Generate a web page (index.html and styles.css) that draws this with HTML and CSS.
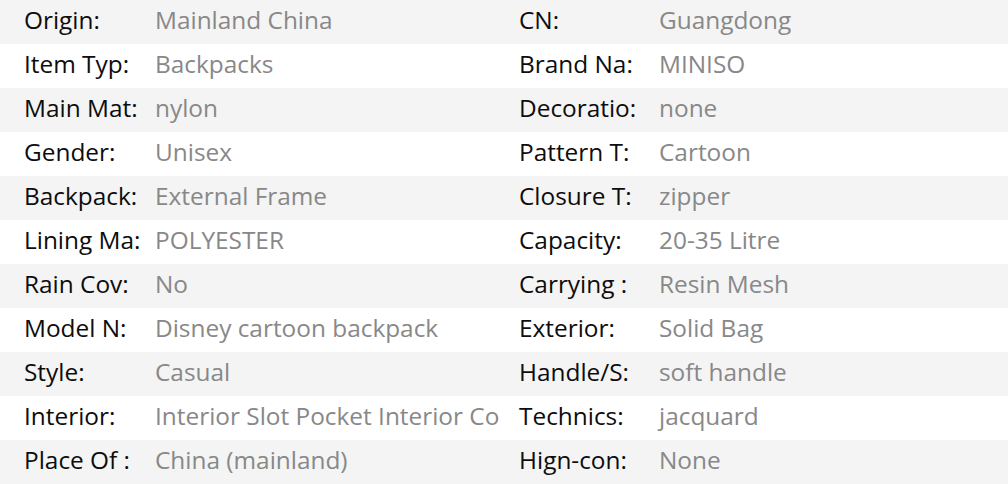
FILE: index.html
```html
<!DOCTYPE html>
<html>
<head>
<meta charset="utf-8">
<link rel="stylesheet" href="styles.css">
</head>
<body>
<div class="specs">
  <div class="row"><span class="k">Origin:</span><span class="v">Mainland China</span><span class="k2">CN:</span><span class="v2">Guangdong</span></div>
  <div class="row"><span class="k">Item Typ:</span><span class="v">Backpacks</span><span class="k2">Brand Na:</span><span class="v2">MINISO</span></div>
  <div class="row"><span class="k">Main Mat:</span><span class="v">nylon</span><span class="k2">Decoratio:</span><span class="v2">none</span></div>
  <div class="row"><span class="k">Gender:</span><span class="v">Unisex</span><span class="k2">Pattern T:</span><span class="v2">Cartoon</span></div>
  <div class="row"><span class="k">Backpack:</span><span class="v">External Frame</span><span class="k2">Closure T:</span><span class="v2">zipper</span></div>
  <div class="row"><span class="k">Lining Ma:</span><span class="v">POLYESTER</span><span class="k2">Capacity:</span><span class="v2">20-35 Litre</span></div>
  <div class="row"><span class="k">Rain Cov:</span><span class="v">No</span><span class="k2">Carrying :</span><span class="v2">Resin Mesh</span></div>
  <div class="row"><span class="k">Model N:</span><span class="v">Disney cartoon backpack</span><span class="k2">Exterior:</span><span class="v2">Solid Bag</span></div>
  <div class="row"><span class="k">Style:</span><span class="v">Casual</span><span class="k2">Handle/S:</span><span class="v2">soft handle</span></div>
  <div class="row"><span class="k">Interior:</span><span class="v">Interior Slot Pocket Interior Co</span><span class="k2">Technics:</span><span class="v2">jacquard</span></div>
  <div class="row"><span class="k">Place Of :</span><span class="v">China (mainland)</span><span class="k2">Hign-con:</span><span class="v2">None</span></div>
</div>
</body>
</html>
```
FILE: styles.css
```css
html, body {
  margin: 0;
  padding: 0;
  background: #ffffff;
}
.specs {
  width: 1008px;
  font-family: "Open Sans", "Noto Sans", sans-serif;
  font-size: 24.4px;
}
.row {
  display: flex;
  height: 44px;
  line-height: 40px;
  padding-left: 24px;
  white-space: nowrap;
}
.row:nth-child(odd) {
  background: #f4f4f4;
}
.k, .k2 {
  color: #0d0d0d;
  flex: none;
}
.v, .v2 {
  color: #888888;
}
.k { width: 131px; }
.v { width: 350px; flex: none; }
.k2 { width: 140px; margin-left: 14px; }
.v2 { flex: 1; }
```
